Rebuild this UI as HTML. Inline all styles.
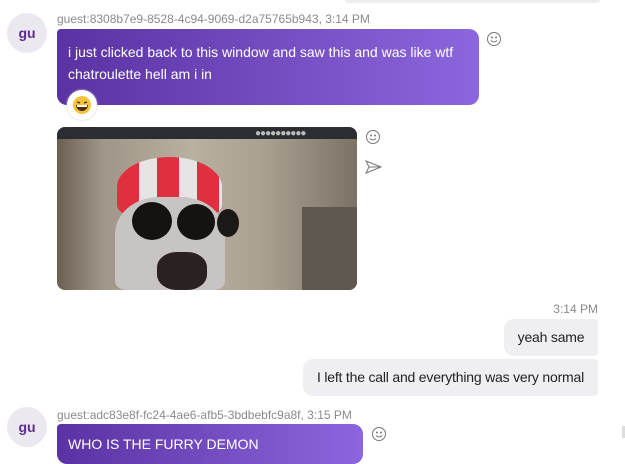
<!DOCTYPE html>
<html><head><style>
body{margin:0;width:625px;height:460px;overflow:hidden;background:#fff;font-family:"Liberation Sans",sans-serif;position:relative}
.a{position:absolute}
.av{width:40px;height:40px;border-radius:50%;background:#ebe8ef;color:#5b2d90;font-weight:bold;font-size:14px;text-align:center;line-height:40px}
.nm{font-size:12px;color:#8a8a8a;letter-spacing:0}
.pb{background:linear-gradient(90deg,#5a32a3,#8c66dd);color:#fff;font-size:14px;border-radius:4px 10px 10px 10px;letter-spacing:0}
.gb{background:#efeff3;color:#222;font-size:14px;border-radius:10px 4px 4px 10px;letter-spacing:-0.2px}
</style></head><body>
<div class="a" style="left:345px;top:0;width:255px;height:3px;background:#eeeef0;border-radius:0 0 4px 4px"></div>
<div class="a av" style="left:7px;top:13px">gu</div>
<div class="a nm" style="left:57px;top:12px">guest:8308b7e9-8528-4c94-9069-d2a75765b943, 3:14 PM</div>
<div class="a pb" style="left:57px;top:29px;width:422px;height:76px;border-radius:4px 10px 10px 10px">
<div style="position:absolute;left:11px;top:12px;line-height:22px">i just clicked back to this window and saw this and was like wtf<br>chatroulette hell am i in</div></div>
<div class="a" style="left:67px;top:90px;width:30px;height:30px;border-radius:50%;background:#fff;box-shadow:0 0 2px #ccc;text-align:center;line-height:30px;font-size:18px">
<svg width="20" height="20" viewBox="0 0 20 20" style="margin-top:5px"><circle cx="10" cy="10" r="9" fill="#f5c33b"/><path d="M4 10h12a6 6 0 0 1-12 0z" fill="#4a2a1a"/><path d="M5 11h10" stroke="#fff" stroke-width="2"/><path d="M5 7l3 1M15 7l-3 1" stroke="#4a2a1a" stroke-width="1.4"/></svg></div>
<svg class="a" style="left:486px;top:31px" width="16" height="16" viewBox="0 0 16 16" fill="none" stroke="#777" stroke-width="1"><circle cx="8" cy="8" r="6.5"/><circle cx="6" cy="6.5" r=".5" fill="#777"/><circle cx="10" cy="6.5" r=".5" fill="#777"/><path d="M5 9.5q3 3 6 0"/></svg>
<div class="a" style="left:57px;top:127px;width:300px;height:163px;border-radius:8px;overflow:hidden;background:linear-gradient(90deg,#6b6052 0%,#9f9588 15%,#b8b0a0 45%,#a89f90 70%,#7a7365 100%)">
<div style="position:absolute;left:0;top:0;width:300px;height:12px;background:#2c2d33"></div>
<div style="position:absolute;left:198px;top:1px;font-size:10px;color:#bbb;letter-spacing:-1px">●●●●●●●●●●</div>
<div style="position:absolute;left:60px;top:30px;width:105px;height:60px;border-radius:50% 50% 20% 20%;background:repeating-linear-gradient(90deg,#e03040 0 22px,#e8e4e4 22px 40px)"></div>
<div style="position:absolute;left:58px;top:70px;width:110px;height:93px;border-radius:40% 40% 10% 10%;background:#c8c4c4"></div>
<div style="position:absolute;left:75px;top:75px;width:40px;height:38px;border-radius:50%;background:#151212"></div>
<div style="position:absolute;left:120px;top:77px;width:38px;height:36px;border-radius:50%;background:#151212"></div>
<div style="position:absolute;left:160px;top:82px;width:22px;height:28px;border-radius:50%;background:#1d1818"></div>
<div style="position:absolute;left:100px;top:125px;width:50px;height:38px;border-radius:40%;background:#2a2222"></div>
<div style="position:absolute;left:245px;top:80px;width:55px;height:83px;background:#5e5850"></div>
</div>
<svg class="a" style="left:365px;top:129px" width="16" height="16" viewBox="0 0 16 16" fill="none" stroke="#777" stroke-width="1"><circle cx="8" cy="8" r="6.5"/><circle cx="6" cy="6.5" r=".5" fill="#777"/><circle cx="10" cy="6.5" r=".5" fill="#777"/><path d="M5 9.5q3 3 6 0"/></svg>
<svg class="a" style="left:365px;top:160px" width="17" height="14" viewBox="0 0 17 14" fill="none" stroke="#777" stroke-width="1"><path d="M1 1l15 6-15 6 3-6z M4 7h12"/></svg>
<div class="a nm" style="right:27px;top:302px">3:14 PM</div>
<div class="a gb" style="left:504px;top:319px;width:94px;height:37px;line-height:37px;text-align:center">yeah same</div>
<div class="a gb" style="left:303px;top:359px;width:295px;height:37px;line-height:37px;text-align:center">I left the call and everything was very normal</div>
<div class="a av" style="left:7px;top:407px">gu</div>
<div class="a nm" style="left:57px;top:408px">guest:adc83e8f-fc24-4ae6-afb5-3bdbebfc9a8f, 3:15 PM</div>
<div class="a pb" style="left:57px;top:424px;width:306px;height:40px"><div style="position:absolute;left:11px;top:12px">WHO IS THE FURRY DEMON</div></div>
<svg class="a" style="left:371px;top:426px" width="16" height="16" viewBox="0 0 16 16" fill="none" stroke="#777" stroke-width="1"><circle cx="8" cy="8" r="6.5"/><circle cx="6" cy="6.5" r=".5" fill="#777"/><circle cx="10" cy="6.5" r=".5" fill="#777"/><path d="M5 9.5q3 3 6 0"/></svg>
<div class="a" style="left:622px;top:426px;width:3px;height:12px;background:#ddd"></div>
</body></html>
